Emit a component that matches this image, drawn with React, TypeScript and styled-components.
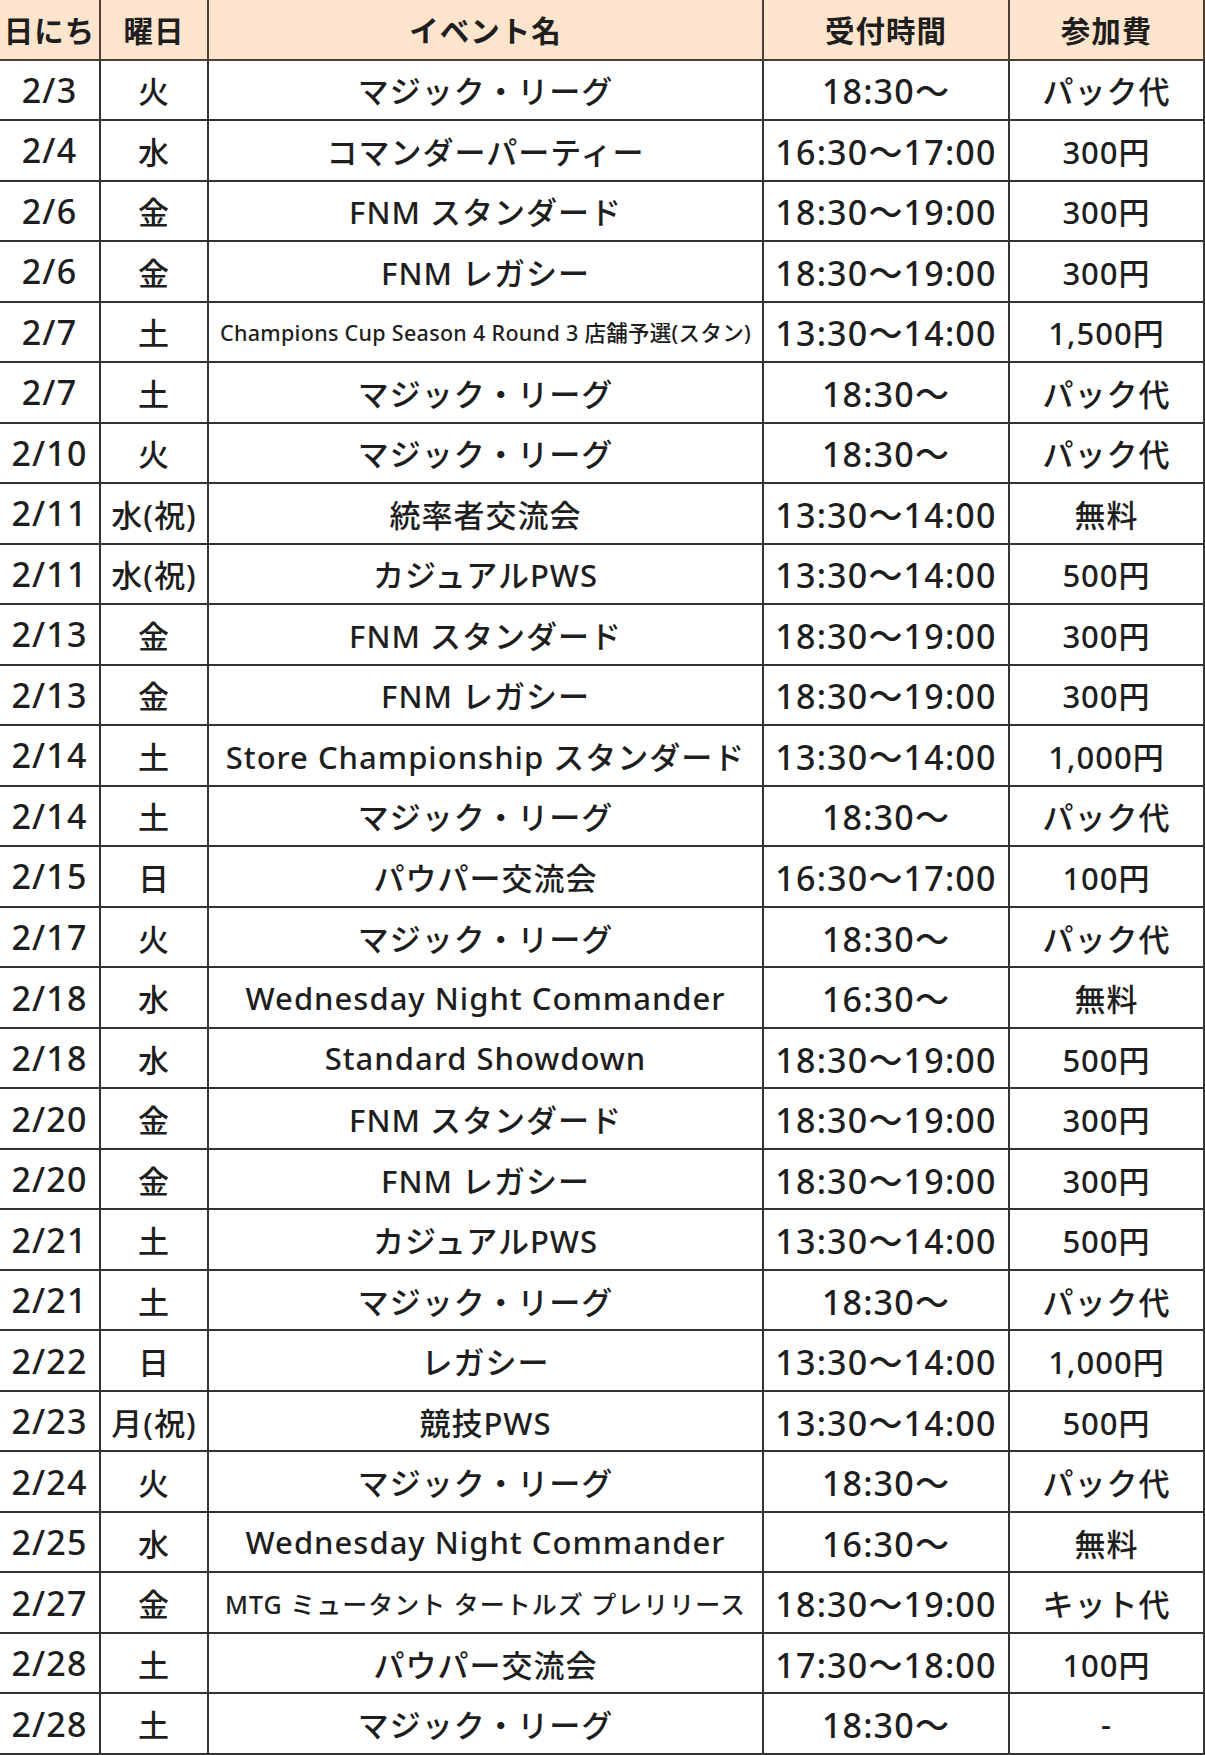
import React from "react";
import styled, { createGlobalStyle } from "styled-components";

const GlobalStyle = createGlobalStyle`
  html, body {
    margin: 0;
    padding: 0;
    background: #ffffff;
  }
  * { box-sizing: border-box; }
`;

type Row = {
  date: string;
  day: string;
  name: string;
  time: string;
  fee: string;
  size?: "s" | "m";
};

const rows: Row[] = [
  { date: "2/3", day: "火", name: "マジック・リーグ", time: "18:30〜", fee: "パック代" },
  { date: "2/4", day: "水", name: "コマンダーパーティー", time: "16:30〜17:00", fee: "300円" },
  { date: "2/6", day: "金", name: "FNM スタンダード", time: "18:30〜19:00", fee: "300円" },
  { date: "2/6", day: "金", name: "FNM レガシー", time: "18:30〜19:00", fee: "300円" },
  { date: "2/7", day: "土", name: "Champions Cup Season 4 Round 3 店舗予選(スタン)", time: "13:30〜14:00", fee: "1,500円", size: "s" },
  { date: "2/7", day: "土", name: "マジック・リーグ", time: "18:30〜", fee: "パック代" },
  { date: "2/10", day: "火", name: "マジック・リーグ", time: "18:30〜", fee: "パック代" },
  { date: "2/11", day: "水(祝)", name: "統率者交流会", time: "13:30〜14:00", fee: "無料" },
  { date: "2/11", day: "水(祝)", name: "カジュアルPWS", time: "13:30〜14:00", fee: "500円" },
  { date: "2/13", day: "金", name: "FNM スタンダード", time: "18:30〜19:00", fee: "300円" },
  { date: "2/13", day: "金", name: "FNM レガシー", time: "18:30〜19:00", fee: "300円" },
  { date: "2/14", day: "土", name: "Store Championship スタンダード", time: "13:30〜14:00", fee: "1,000円" },
  { date: "2/14", day: "土", name: "マジック・リーグ", time: "18:30〜", fee: "パック代" },
  { date: "2/15", day: "日", name: "パウパー交流会", time: "16:30〜17:00", fee: "100円" },
  { date: "2/17", day: "火", name: "マジック・リーグ", time: "18:30〜", fee: "パック代" },
  { date: "2/18", day: "水", name: "Wednesday Night Commander", time: "16:30〜", fee: "無料" },
  { date: "2/18", day: "水", name: "Standard Showdown", time: "18:30〜19:00", fee: "500円" },
  { date: "2/20", day: "金", name: "FNM スタンダード", time: "18:30〜19:00", fee: "300円" },
  { date: "2/20", day: "金", name: "FNM レガシー", time: "18:30〜19:00", fee: "300円" },
  { date: "2/21", day: "土", name: "カジュアルPWS", time: "13:30〜14:00", fee: "500円" },
  { date: "2/21", day: "土", name: "マジック・リーグ", time: "18:30〜", fee: "パック代" },
  { date: "2/22", day: "日", name: "レガシー", time: "13:30〜14:00", fee: "1,000円" },
  { date: "2/23", day: "月(祝)", name: "競技PWS", time: "13:30〜14:00", fee: "500円" },
  { date: "2/24", day: "火", name: "マジック・リーグ", time: "18:30〜", fee: "パック代" },
  { date: "2/25", day: "水", name: "Wednesday Night Commander", time: "16:30〜", fee: "無料" },
  { date: "2/27", day: "金", name: "MTG ミュータント タートルズ プレリリース", time: "18:30〜19:00", fee: "キット代", size: "m" },
  { date: "2/28", day: "土", name: "パウパー交流会", time: "17:30〜18:00", fee: "100円" },
  { date: "2/28", day: "土", name: "マジック・リーグ", time: "18:30〜", fee: "-" },
];

const Table = styled.div`
  width: 1205px;
  height: 1755px;
  display: grid;
  grid-template-columns: 101px 108px 555px 246px 195px;
  grid-template-rows: repeat(29, 1fr);
  font-family: "Noto Sans", "Noto Sans CJK JP", sans-serif;
  color: #1e1e1e;
`;

const HeaderCell = styled.div`
  display: flex;
  align-items: center;
  justify-content: center;
  background: #fde4cd;
  border-right: 2px solid #4a4038;
  border-bottom: 2px solid #4a4038;
  font-family: "Noto Sans CJK JP", sans-serif;
  font-weight: 700;
  font-size: 29.5px;
  letter-spacing: 1px;
  white-space: nowrap;
`;

const Cell = styled.div<{ $size?: "s" | "m" }>`
  display: flex;
  align-items: center;
  justify-content: center;
  border-right: 2px solid #333;
  border-bottom: 2px solid #333;
  font-weight: 500;
  font-size: ${(p) => (p.$size === "s" ? "21.5px" : p.$size === "m" ? "25px" : "31px")};
  letter-spacing: ${(p) => (p.$size === "s" ? "0.3px" : "1px")};
  white-space: nowrap;
  overflow: hidden;
`;

const NumCell = styled(Cell)`
  font-size: 34px;
  letter-spacing: 1.2px;
`;

const headers = ["日にち", "曜日", "イベント名", "受付時間", "参加費"];

export default function App() {
  return (
    <>
      <GlobalStyle />
      <Table>
        {headers.map((h) => (
          <HeaderCell key={h}>{h}</HeaderCell>
        ))}
        {rows.map((r, i) => (
          <React.Fragment key={i}>
            <NumCell>{r.date}</NumCell>
            <Cell>{r.day}</Cell>
            <Cell $size={r.size}>{r.name}</Cell>
            <NumCell>{r.time}</NumCell>
            <Cell>{r.fee}</Cell>
          </React.Fragment>
        ))}
      </Table>
    </>
  );
}
